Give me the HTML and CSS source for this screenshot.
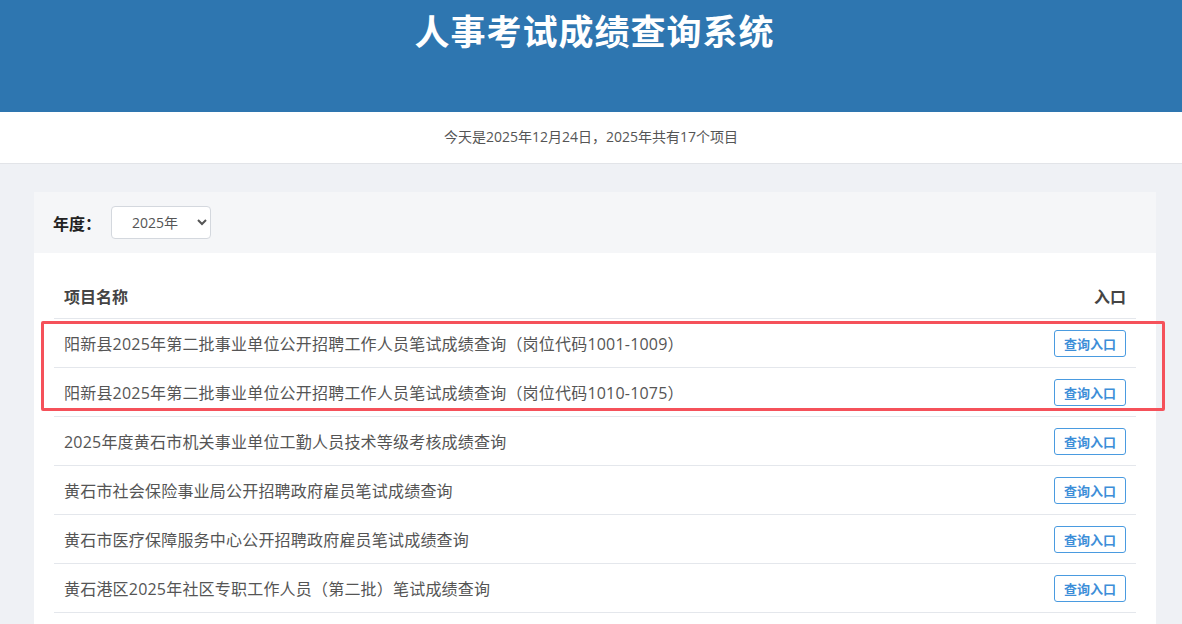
FILE: index.html
```html
<!DOCTYPE html>
<html lang="zh-CN">
<head>
  <meta charset="UTF-8">
  <title>人事考试成绩查询系统</title>
  <link rel="stylesheet" href="styles.css">
</head>
<body>
  <div class="header">
    <h1>人事考试成绩查询系统</h1>
  </div>
  <div class="info-bar">今天是2025年12月24日，2025年共有17个项目</div>

  <div class="main">
    <div class="panel">
      <div class="filter">
        <label>年度：</label>
        <select class="year-select">
          <option>2025年</option>
        </select>
      </div>
      <div class="list-wrap">
        <table class="list">
          <thead>
            <tr><th>项目名称</th><th class="right">入口</th></tr>
          </thead>
          <tbody>
            <tr><td>阳新县2025年第二批事业单位公开招聘工作人员笔试成绩查询（岗位代码1001-1009）</td><td class="right"><a class="btn">查询入口</a></td></tr>
            <tr><td>阳新县2025年第二批事业单位公开招聘工作人员笔试成绩查询（岗位代码1010-1075）</td><td class="right"><a class="btn">查询入口</a></td></tr>
            <tr><td>2025年度黄石市机关事业单位工勤人员技术等级考核成绩查询</td><td class="right"><a class="btn">查询入口</a></td></tr>
            <tr><td>黄石市社会保险事业局公开招聘政府雇员笔试成绩查询</td><td class="right"><a class="btn">查询入口</a></td></tr>
            <tr><td>黄石市医疗保障服务中心公开招聘政府雇员笔试成绩查询</td><td class="right"><a class="btn">查询入口</a></td></tr>
            <tr><td>黄石港区2025年社区专职工作人员（第二批）笔试成绩查询</td><td class="right"><a class="btn">查询入口</a></td></tr>
            <tr><td>黄石市2025年事业单位公开招聘工作人员笔试成绩查询</td><td class="right"><a class="btn">查询入口</a></td></tr>
          </tbody>
        </table>
        <div class="highlight"></div>
      </div>
    </div>
  </div>
</body>
</html>
```

FILE: styles.css
```css
body {
margin: 0;
font-family: "Open Sans", "Noto Sans CJK SC", sans-serif;
background-color: #eff1f5;
color: #333;
}

.header {
background-color: #2e76b0;
height: 112px;
text-align: center;
overflow: hidden;
}
.header h1 {
margin: 0;
padding: 6px 0 0 7px;
color: #fff;
font-family: "Noto Sans CJK SC", sans-serif;
font-size: 35px;
font-weight: bold;
line-height: 48px;
letter-spacing: 1px;
}

.info-bar {
background-color: #fff;
height: 51px;
line-height: 49px;
text-align: center;
font-size: 14px;
color: #555;
border-bottom: 1px solid #e2e4e8;
}

.main {
padding: 28px 26px 0 34px;
}
.panel {
background-color: #fff;
}

.filter {
background-color: #f5f6f8;
height: 61px;
display: flex;
align-items: center;
padding-left: 19px;
}
.filter label {
font-size: 16px;
font-weight: bold;
color: #222;
width: 58px;
}
.year-select {
width: 100px;
height: 33px;
border: 1px solid #d4d8de;
border-radius: 4px;
background-color: #fff;
color: #555;
font-size: 14px;
font-family: "Open Sans", "Noto Sans CJK SC", sans-serif;
padding-left: 16px;
}

.list-wrap {
position: relative;
padding: 21px 20px 0 20px;
}
.list {
width: 100%;
border-collapse: collapse;
}
.list th {
text-align: left;
font-size: 16px;
font-weight: bold;
color: #444;
height: 44px;
padding: 0 10px;
border-bottom: 1px solid #e4e7ec;
}
.list td {
font-size: 16px;
color: #555;
height: 48px;
padding: 0 10px;
border-bottom: 1px solid #e4e7ec;
letter-spacing: 0.2px;
}
.list .right {
text-align: right;
}
.btn {
display: inline-block;
width: 70px;
height: 25px;
line-height: 25px;
text-align: center;
border: 1px solid #4a9be0;
border-radius: 3px;
color: #3d8ed8;
font-family: "Noto Sans CJK SC", sans-serif;
font-size: 13px;
font-weight: bold;
letter-spacing: 0;
}

.highlight {
position: absolute;
left: 7px;
top: 68px;
width: 1118px;
height: 84px;
border: 3px solid #f5515a;
border-radius: 2px;
}
```
